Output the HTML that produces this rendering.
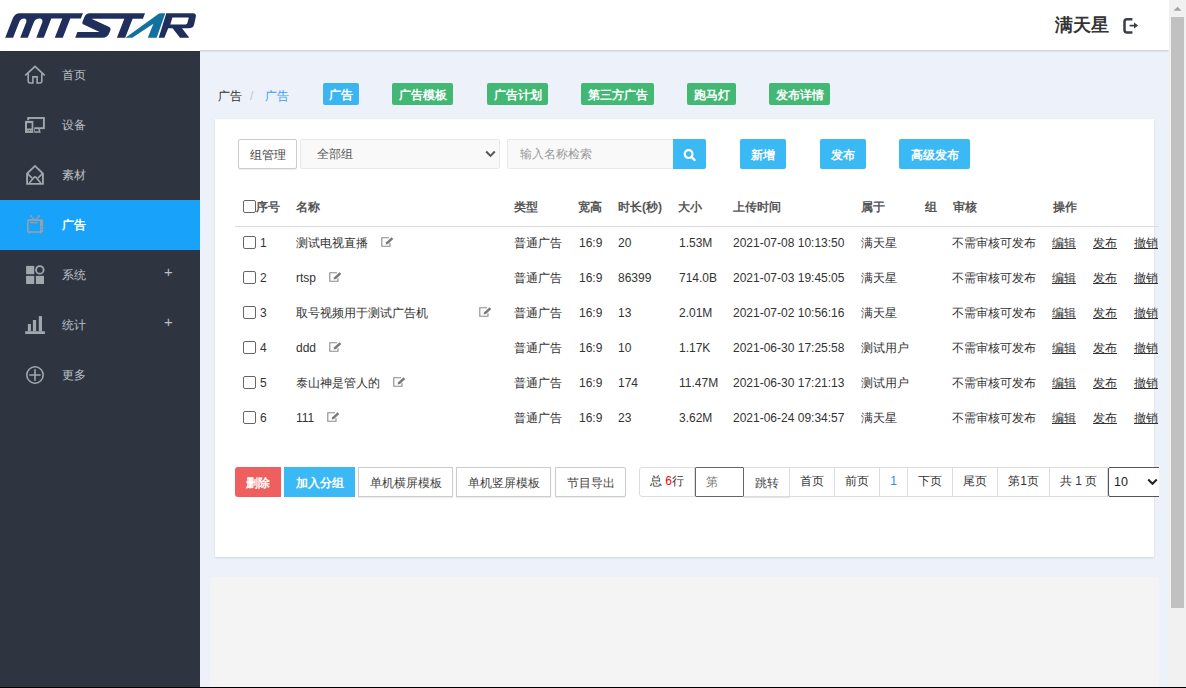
<!DOCTYPE html>
<html><head><meta charset="utf-8">
<style>
*{box-sizing:border-box;margin:0;padding:0}
html,body{width:1186px;height:688px;overflow:hidden;background:#edf1f9;font-family:"Liberation Sans",sans-serif;color:#333;font-size:12px}
.abs{position:absolute}
#header{position:absolute;left:0;top:0;width:1169px;height:50px;background:#fff;box-shadow:0 1px 2px rgba(0,0,40,.16);z-index:3}
#side{position:absolute;left:0;top:50px;width:200px;height:638px;background:#2f3540;z-index:2}
#main{position:absolute;left:200px;top:50px;width:969px;height:638px;background:#edf1f9}
#sb{position:absolute;left:1169px;top:0;width:17px;height:688px;background:#f1f1f1;z-index:5}
#bottomline{position:absolute;left:0;top:687px;width:1186px;height:1px;background:#000;z-index:9}
.nav{position:absolute;left:0;width:200px;height:50px;color:#bcc0c8;font-size:12px}
.nav .t{position:absolute;left:62px;top:0;line-height:50px}
.nav.active{background:#18a2f9;color:#fff;font-weight:bold}
.nav svg{position:absolute;left:25px}
.plus{position:absolute;left:164px;top:0;line-height:43px;font-size:15px;color:#bcc0c8}
.tag{position:absolute;top:83px;height:22px;line-height:25px;color:#fff;font-size:12px;text-align:center;border-radius:2px;font-weight:bold}
.green{background:#43b874}
.blue{background:#3bb5f2}
#panel{position:absolute;left:215px;top:119px;width:939px;height:438px;background:#fff;box-shadow:0 1px 2px rgba(0,0,40,.12)}
.btn{position:absolute;height:30px;line-height:32px;text-align:center;font-size:12px;border-radius:2px}
.bb{background:#3bb9f5;color:#fff;font-weight:bold}
.bw{background:#fff;border:1px solid #ccc;color:#444;box-shadow:0 1px 1px rgba(0,0,0,.08)}
.th{position:absolute;top:200px;line-height:14px;font-weight:bold;color:#555}
.td{position:absolute;line-height:14px;color:#333}
.cb{position:absolute;width:13px;height:13px;border:1px solid #666;border-radius:2px;background:#fff}
.lk{text-decoration:underline}
.pg{position:absolute;top:467px;height:30px;line-height:27px;border:1px solid #ddd;border-left:none;text-align:center;font-size:12px;color:#333;background:#fff}
</style></head><body>
<div id="header">
  <svg class="abs" style="left:0;top:0" width="200" height="50" viewBox="0 0 200 50">
<g fill="#1f2e5b">
<g transform="matrix(1 0 -0.39 1 14.703 0)">
<path d="M5.2 37.7 V18.4 Q5.2 13.2 10.4 13.2 H73.4 V18.5 H62.8 V37.7 H54.8 V18.5 H43.8 V37.7 H36.3 V22.5 A4.25 4 0 0 0 27.8 22.5 V37.7 H20.2 V22.5 A3.55 4 0 0 0 13.1 22.5 V37.7 Z"/>
<path d="M75.2 37.7 H102.5 Q107.5 37.7 107.5 32.7 V30.5 Q107.5 28 104.5 26.8 L84 18.7 H116.9 V37.7 H125.2 V18.7 H135.5 V13.2 H80.3 Q76.3 13.2 76.3 17.2 V22 Q76.3 23.5 77.8 24.2 L97.4 32.1 H75.2 Z"/>
</g>
<path fill-rule="evenodd" d="M158.7 37.7 L166.3 13.2 H193 Q196.6 13.2 195.8 17 L194 25 Q193 28.3 188.5 28.3 H182 L189.3 37.7 H180 L172.6 28.3 H168.2 L164.4 37.7 Z M172.4 17.6 H188.8 L187.4 23 Q187 24.4 185.6 24.4 H170.3 Z"/>
</g>
<path fill="#12729f" d="M125.4 37.7 L158 14.2 Q159 13.3 160.5 13.3 H165.3 L156.7 37.7 H147.8 L153.4 23.7 L132.3 37.7 Z"/>
</svg>
  <div class="abs" style="left:1055px;top:12px;font-size:17.5px;font-weight:bold;line-height:26px;color:#333">满天星</div>
  <svg class="abs" style="left:1120px;top:15px" width="22" height="22" viewBox="0 0 22 22">
    <path d="M12.4 4.3 H7 Q4.5 4.3 4.5 6.8 V14.9 Q4.5 17.4 7 17.4 H12.4" fill="none" stroke="#3b3d4f" stroke-width="2.5"/>
    <path d="M9.6 10.6 H14.5" stroke="#3b3d4f" stroke-width="1.7"/>
    <path d="M14 7.6 L18.2 10.6 L14 13.6 Z" fill="#3b3d4f"/>
  </svg>
</div>
<div id="main"></div>
<div id="side">
  <div class="nav" style="top:0"><svg class="abs" style="left:20px;top:10px" width="30" height="30" viewBox="0 0 30 30"><path d="M5.3 15.3 L15 6.3 L24.7 15.3" fill="none" stroke="#a2a6ad" stroke-width="1.7" stroke-linejoin="miter"/><path d="M8.2 13.2 V21 Q8.2 23 10.2 23 H12.9 V16.9 H17.1 V23 H19.8 Q21.8 23 21.8 21 V13.2" fill="none" stroke="#a2a6ad" stroke-width="1.6"/></svg><span class="t">首页</span></div>
  <div class="nav" style="top:50px"><svg class="abs" style="left:20px;top:10px" width="30" height="30" viewBox="0 0 30 30"><rect x="8.2" y="8" width="15.7" height="10.2" fill="none" stroke="#a2a6ad" stroke-width="1.9"/><path d="M14.2 19 V22.1 H19.8 L19 19" fill="none" stroke="#a2a6ad" stroke-width="1.5"/><rect x="4.3" y="10.2" width="9.9" height="13.4" fill="#2f3540"/><rect x="5" y="10.9" width="8.3" height="12" fill="#a2a6ad"/><rect x="7" y="13.1" width="4.6" height="5.4" fill="#2f3540"/><rect x="7" y="20" width="4.6" height="1" fill="#4a5059"/><rect x="7.4" y="20" width="1.2" height="1" fill="#a2a6ad"/><rect x="10" y="20" width="1.2" height="1" fill="#a2a6ad"/></svg><span class="t">设备</span></div>
  <div class="nav" style="top:100px"><svg class="abs" style="left:20px;top:10px" width="30" height="30" viewBox="0 0 30 30"><path d="M7.1 13.5 L15 5.9 L22.9 13.5" fill="none" stroke="#a2a6ad" stroke-width="1.8"/><path d="M7.1 13 V23.9 H22.9 V13" fill="none" stroke="#a2a6ad" stroke-width="1.9"/><path d="M7.6 13.6 L12.2 18.2 M22.4 13.6 L17.8 18.2" stroke="#a2a6ad" stroke-width="1.6"/><path d="M9.3 23 L14 17.4 Q15 16.4 16 17.4 L20.7 23" fill="none" stroke="#a2a6ad" stroke-width="1.6"/></svg><span class="t">素材</span></div>
  <div class="nav active" style="top:150px"><svg class="abs" style="left:20px;top:10px" width="30" height="30" viewBox="0 0 30 30"><path d="M11.1 6.1 L14 9.4 M19 6.1 L16.1 9.4" stroke="#a09ea5" stroke-width="1.3" stroke-linecap="round"/><circle cx="11.1" cy="6.2" r="0.9" fill="#a09ea5"/><circle cx="19" cy="6.2" r="0.9" fill="#a09ea5"/><path fill-rule="evenodd" fill="#a09ea5" d="M9 9.2 H21.1 Q23.1 9.2 23.1 11.2 V20.7 Q23.1 22.7 21.1 22.7 H9 Q7 22.7 7 20.7 V11.2 Q7 9.2 9 9.2 Z M8.6 10.9 V21.3 H20 V10.9 Z"/><path d="M9.9 12.7 H17.7" stroke="#a09ea5" stroke-width="1.2"/><circle cx="21.5" cy="16.6" r="0.7" fill="#18a2f6"/><circle cx="21.5" cy="19.2" r="0.7" fill="#18a2f6"/><path d="M8.3 22.4 L9.4 24.3 L10.5 22.4 Z M19.2 22.4 L20.3 24.3 L21.4 22.4 Z" fill="#a09ea5"/></svg><span class="t">广告</span></div>
  <div class="nav" style="top:200px"><svg class="abs" style="left:20px;top:10px" width="30" height="30" viewBox="0 0 30 30"><rect x="6.1" y="5.9" width="8.1" height="8.3" fill="#a2a6ad"/><rect x="6.1" y="15.9" width="8.1" height="8.1" fill="#a2a6ad"/><rect x="15.9" y="15.9" width="8.1" height="8.1" fill="#a2a6ad"/><circle cx="19.8" cy="9.9" r="3.8" fill="none" stroke="#a2a6ad" stroke-width="1.8"/></svg><span class="t">系统</span><span class="plus">+</span></div>
  <div class="nav" style="top:250px"><svg class="abs" style="left:20px;top:10px" width="30" height="30" viewBox="0 0 30 30"><rect x="5.2" y="21.2" width="19.7" height="2.8" fill="#a2a6ad"/><rect x="7.9" y="14" width="3" height="7.2" fill="#a2a6ad"/><rect x="12.9" y="10" width="3.2" height="11.2" fill="#a2a6ad"/><rect x="18.8" y="6.1" width="3.2" height="15.1" fill="#a2a6ad"/></svg><span class="t">统计</span><span class="plus">+</span></div>
  <div class="nav" style="top:300px"><svg class="abs" style="left:20px;top:10px" width="30" height="30" viewBox="0 0 30 30"><circle cx="15" cy="15" r="8.2" fill="none" stroke="#a2a6ad" stroke-width="1.6"/><path d="M9.3 15 H20.7 M15 9.3 V20.7" stroke="#a2a6ad" stroke-width="1.6"/></svg><span class="t">更多</span></div>
</div>

<div class="abs" style="left:218px;top:89px;line-height:14px;font-size:12px;color:#333">广告</div>
<div class="abs" style="left:250px;top:89px;line-height:14px;font-size:12px;color:#c0c4cc">/</div>
<div class="abs" style="left:265px;top:89px;line-height:14px;font-size:12px;color:#409eff">广告</div>
<div class="tag blue" style="left:323px;width:36px">广告</div>
<div class="tag green" style="left:392px;width:61px">广告模板</div>
<div class="tag green" style="left:487px;width:61px">广告计划</div>
<div class="tag green" style="left:581px;width:73px">第三方广告</div>
<div class="tag green" style="left:687px;width:49px">跑马灯</div>
<div class="tag green" style="left:769px;width:61px">发布详情</div>

<div id="panel"></div>

<div class="btn bw" style="left:238px;top:139px;width:59px;height:30px;line-height:30px">组管理</div>
<div class="abs" style="left:300px;top:139px;width:200px;height:30px;background:#f9f9f9;border:1px solid #e8e8e8;border-radius:2px"></div>
<div class="abs" style="left:317px;top:147px;line-height:14px;font-size:12px;color:#555">全部组</div>
<svg class="abs" style="left:485px;top:150px" width="11" height="8" viewBox="0 0 11 8"><path d="M1.2 1.5 L5.5 5.8 L9.8 1.5" fill="none" stroke="#555" stroke-width="1.9"/></svg>
<div class="abs" style="left:507px;top:139px;width:166px;height:30px;background:#f9f9f9;border:1px solid #e8e8e8;border-right:none;border-radius:2px 0 0 2px"></div>
<div class="abs" style="left:520px;top:147px;line-height:14px;font-size:12px;color:#999">输入名称检索</div>
<div class="btn bb" style="left:673px;top:139px;width:33px;border-radius:0 2px 2px 0"></div>
<svg class="abs" style="left:683px;top:148px" width="14" height="14" viewBox="0 0 14 14"><circle cx="5.6" cy="6.1" r="3.9" fill="none" stroke="#fff" stroke-width="2.2"/><path d="M8.6 9.1 L11.6 12" stroke="#fff" stroke-width="2.4" stroke-linecap="round"/></svg>
<div class="btn bb" style="left:740px;top:139px;width:46px">新增</div>
<div class="btn bb" style="left:820px;top:139px;width:46px">发布</div>
<div class="btn bb" style="left:899px;top:139px;width:71px">高级发布</div>

<div class="abs" style="left:0;top:0;width:1159px;height:688px;overflow:hidden">
<div class="cb" style="left:243px;top:200px"></div><div class="th" style="left:256px">序号</div>
<div class="th" style="left:296px">名称</div>
<div class="th" style="left:514px">类型</div>
<div class="th" style="left:578px">宽高</div>
<div class="th" style="left:618px">时长(秒)</div>
<div class="th" style="left:678px">大小</div>
<div class="th" style="left:733px">上传时间</div>
<div class="th" style="left:861px">属于</div>
<div class="th" style="left:925px">组</div>
<div class="th" style="left:953px">审核</div>
<div class="th" style="left:1053px">操作</div>
<div class="abs" style="left:235px;top:226px;width:924px;height:1px;background:#ddd"></div>
<div class="cb" style="left:243px;top:236px"></div>
<div class="td" style="left:260px;top:236px">1</div>
<div class="td" style="left:296px;top:236px">测试电视直播</div>
<svg class="abs" style="left:381px;top:237px" width="13" height="10" viewBox="0 0 13 10"><path d="M8 0.7 H0.8 V9.2 H9 V6.3" fill="none" stroke="#8a8a8a" stroke-width="1.1"/><path d="M4.6 7.5 L5.2 5.3 L10.5 0.2 L12.3 2 L7 7.1 Z" fill="#7a7a7a"/></svg>
<div class="td" style="left:514px;top:236px">普通广告</div>
<div class="td" style="left:579px;top:236px">16:9</div>
<div class="td" style="left:618px;top:236px">20</div>
<div class="td" style="left:679px;top:236px">1.53M</div>
<div class="td" style="left:733px;top:236px">2021-07-08 10:13:50</div>
<div class="td" style="left:861px;top:236px">满天星</div>
<div class="td" style="left:952px;top:236px">不需审核可发布</div>
<div class="td lk" style="left:1052px;top:236px">编辑</div>
<div class="td lk" style="left:1093px;top:236px">发布</div>
<div class="td lk" style="left:1134px;top:236px">撤销</div>
<div class="cb" style="left:243px;top:271px"></div>
<div class="td" style="left:260px;top:271px">2</div>
<div class="td" style="left:296px;top:271px">rtsp</div>
<svg class="abs" style="left:329px;top:272px" width="13" height="10" viewBox="0 0 13 10"><path d="M8 0.7 H0.8 V9.2 H9 V6.3" fill="none" stroke="#8a8a8a" stroke-width="1.1"/><path d="M4.6 7.5 L5.2 5.3 L10.5 0.2 L12.3 2 L7 7.1 Z" fill="#7a7a7a"/></svg>
<div class="td" style="left:514px;top:271px">普通广告</div>
<div class="td" style="left:579px;top:271px">16:9</div>
<div class="td" style="left:618px;top:271px">86399</div>
<div class="td" style="left:679px;top:271px">714.0B</div>
<div class="td" style="left:733px;top:271px">2021-07-03 19:45:05</div>
<div class="td" style="left:861px;top:271px">满天星</div>
<div class="td" style="left:952px;top:271px">不需审核可发布</div>
<div class="td lk" style="left:1052px;top:271px">编辑</div>
<div class="td lk" style="left:1093px;top:271px">发布</div>
<div class="td lk" style="left:1134px;top:271px">撤销</div>
<div class="cb" style="left:243px;top:306px"></div>
<div class="td" style="left:260px;top:306px">3</div>
<div class="td" style="left:296px;top:306px">取号视频用于测试广告机</div>
<svg class="abs" style="left:479px;top:307px" width="13" height="10" viewBox="0 0 13 10"><path d="M8 0.7 H0.8 V9.2 H9 V6.3" fill="none" stroke="#8a8a8a" stroke-width="1.1"/><path d="M4.6 7.5 L5.2 5.3 L10.5 0.2 L12.3 2 L7 7.1 Z" fill="#7a7a7a"/></svg>
<div class="td" style="left:514px;top:306px">普通广告</div>
<div class="td" style="left:579px;top:306px">16:9</div>
<div class="td" style="left:618px;top:306px">13</div>
<div class="td" style="left:679px;top:306px">2.01M</div>
<div class="td" style="left:733px;top:306px">2021-07-02 10:56:16</div>
<div class="td" style="left:861px;top:306px">满天星</div>
<div class="td" style="left:952px;top:306px">不需审核可发布</div>
<div class="td lk" style="left:1052px;top:306px">编辑</div>
<div class="td lk" style="left:1093px;top:306px">发布</div>
<div class="td lk" style="left:1134px;top:306px">撤销</div>
<div class="cb" style="left:243px;top:341px"></div>
<div class="td" style="left:260px;top:341px">4</div>
<div class="td" style="left:296px;top:341px">ddd</div>
<svg class="abs" style="left:329px;top:342px" width="13" height="10" viewBox="0 0 13 10"><path d="M8 0.7 H0.8 V9.2 H9 V6.3" fill="none" stroke="#8a8a8a" stroke-width="1.1"/><path d="M4.6 7.5 L5.2 5.3 L10.5 0.2 L12.3 2 L7 7.1 Z" fill="#7a7a7a"/></svg>
<div class="td" style="left:514px;top:341px">普通广告</div>
<div class="td" style="left:579px;top:341px">16:9</div>
<div class="td" style="left:618px;top:341px">10</div>
<div class="td" style="left:679px;top:341px">1.17K</div>
<div class="td" style="left:733px;top:341px">2021-06-30 17:25:58</div>
<div class="td" style="left:861px;top:341px">测试用户</div>
<div class="td" style="left:952px;top:341px">不需审核可发布</div>
<div class="td lk" style="left:1052px;top:341px">编辑</div>
<div class="td lk" style="left:1093px;top:341px">发布</div>
<div class="td lk" style="left:1134px;top:341px">撤销</div>
<div class="cb" style="left:243px;top:376px"></div>
<div class="td" style="left:260px;top:376px">5</div>
<div class="td" style="left:296px;top:376px">泰山神是管人的</div>
<svg class="abs" style="left:393px;top:377px" width="13" height="10" viewBox="0 0 13 10"><path d="M8 0.7 H0.8 V9.2 H9 V6.3" fill="none" stroke="#8a8a8a" stroke-width="1.1"/><path d="M4.6 7.5 L5.2 5.3 L10.5 0.2 L12.3 2 L7 7.1 Z" fill="#7a7a7a"/></svg>
<div class="td" style="left:514px;top:376px">普通广告</div>
<div class="td" style="left:579px;top:376px">16:9</div>
<div class="td" style="left:618px;top:376px">174</div>
<div class="td" style="left:679px;top:376px">11.47M</div>
<div class="td" style="left:733px;top:376px">2021-06-30 17:21:13</div>
<div class="td" style="left:861px;top:376px">测试用户</div>
<div class="td" style="left:952px;top:376px">不需审核可发布</div>
<div class="td lk" style="left:1052px;top:376px">编辑</div>
<div class="td lk" style="left:1093px;top:376px">发布</div>
<div class="td lk" style="left:1134px;top:376px">撤销</div>
<div class="cb" style="left:243px;top:411px"></div>
<div class="td" style="left:260px;top:411px">6</div>
<div class="td" style="left:296px;top:411px">111</div>
<svg class="abs" style="left:327px;top:412px" width="13" height="10" viewBox="0 0 13 10"><path d="M8 0.7 H0.8 V9.2 H9 V6.3" fill="none" stroke="#8a8a8a" stroke-width="1.1"/><path d="M4.6 7.5 L5.2 5.3 L10.5 0.2 L12.3 2 L7 7.1 Z" fill="#7a7a7a"/></svg>
<div class="td" style="left:514px;top:411px">普通广告</div>
<div class="td" style="left:579px;top:411px">16:9</div>
<div class="td" style="left:618px;top:411px">23</div>
<div class="td" style="left:679px;top:411px">3.62M</div>
<div class="td" style="left:733px;top:411px">2021-06-24 09:34:57</div>
<div class="td" style="left:861px;top:411px">满天星</div>
<div class="td" style="left:952px;top:411px">不需审核可发布</div>
<div class="td lk" style="left:1052px;top:411px">编辑</div>
<div class="td lk" style="left:1093px;top:411px">发布</div>
<div class="td lk" style="left:1134px;top:411px">撤销</div>

<div class="btn" style="left:235px;top:467px;width:46px;background:#ef5f5f;color:#fff;font-weight:bold;border-radius:3px 0 0 3px">删除</div>
<div class="btn bb" style="left:284px;top:467px;width:71px;border-radius:0">加入分组</div>
<div class="btn bw" style="left:358px;top:467px;width:95px;line-height:30px;border-radius:0">单机横屏模板</div>
<div class="btn bw" style="left:456px;top:467px;width:95px;line-height:30px;border-radius:0">单机竖屏模板</div>
<div class="btn bw" style="left:555px;top:467px;width:71px;line-height:30px;border-radius:0 2px 2px 0">节目导出</div>
<div class="pg" style="left:639px;width:56px;border-left:1px solid #ddd;border-radius:3px 0 0 3px">总 <span style="color:#f00">6</span>行</div>
<div class="abs" style="left:695px;top:467px;width:49px;height:30px;border:1px solid #666;background:#fff;border-radius:1px;z-index:1"></div>
<div class="abs" style="left:706px;top:475px;line-height:14px;color:#777;z-index:2">第</div>
<div class="pg" style="left:744px;width:46px;background:#fff;line-height:31px;color:#444;box-shadow:0 1px 1px rgba(0,0,0,.1)">跳转</div>
<div class="pg" style="left:790px;width:45px">首页</div>
<div class="pg" style="left:835px;width:45px">前页</div>
<div class="pg" style="left:880px;width:28px;color:#2d8cf0">1</div>
<div class="pg" style="left:908px;width:45px">下页</div>
<div class="pg" style="left:953px;width:45px">尾页</div>
<div class="pg" style="left:998px;width:52px">第1页</div>
<div class="pg" style="left:1050px;width:58px">共 1 页</div>
<div class="abs" style="left:1108px;top:467px;width:60px;height:30px;border:1px solid #555;background:#fff;border-radius:2px"></div>
<div class="abs" style="left:1114px;top:475px;line-height:14px;color:#222;font-size:12.5px">10</div>
<svg class="abs" style="left:1147px;top:478px" width="11" height="8" viewBox="0 0 11 8"><path d="M1.2 1.5 L5.5 5.8 L9.8 1.5" fill="none" stroke="#222" stroke-width="2"/></svg>

</div>
<div class="abs" style="left:210px;top:577px;width:949px;height:111px;background:#f4f4f4"></div>
<div id="sb"><svg class="abs" style="left:0;top:0" width="17" height="17" viewBox="0 0 17 17"><path d="M4.5 10.8 L8.5 6.8 L12.5 10.8 Z" fill="#a3a3a3"/></svg><div class="abs" style="left:2px;top:17px;width:13px;height:591px;background:#c1c1c1"></div></div>
<div id="bottomline"></div>
<div class="abs" style="left:0;top:50px;width:200px;height:1px;background:#fff;z-index:4"></div>
</body></html>
